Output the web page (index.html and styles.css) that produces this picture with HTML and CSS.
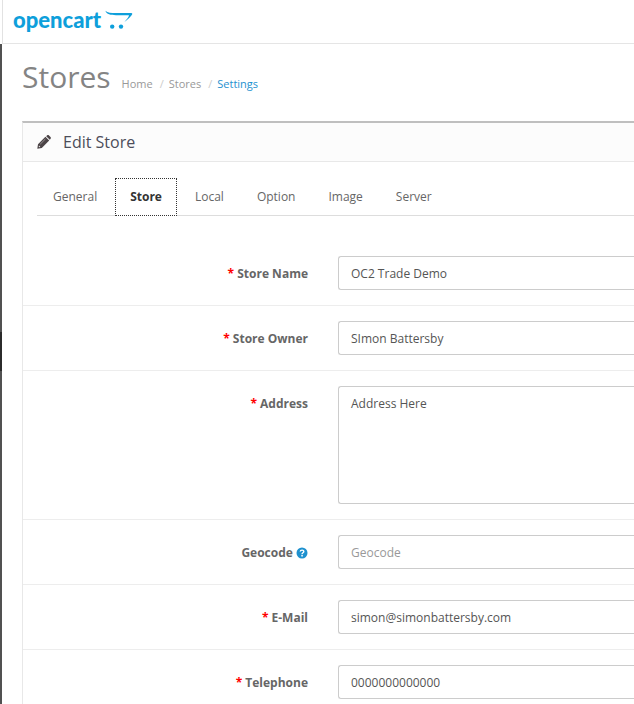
FILE: index.html
```html
<!DOCTYPE html>
<html lang="en">
<head>
    <meta charset="UTF-8">
    <meta name="viewport" content="width=device-width, initial-scale=1.0">
    <title>Stores</title>
    <link rel="stylesheet" href="styles.css">
</head>
<body>
    <header class="header">
        <a href="#" class="logo">
            <span>opencart</span>
            <svg width="28" height="20" viewBox="0 0 28 20" aria-hidden="true">
                <path d="M0.4 0.8 C2.5 3 6 3.1 11 3.1 L26.2 3 C27.6 3.1 27.6 4 26.8 5 C25 7.4 22.6 9.4 19.4 12 C21.2 9.4 24 7.4 24 5.2 L11 5.2 C5.5 5.1 1.6 4.4 0.4 0.8 Z" fill="#0e9fdb"/>
                <circle cx="7.2" cy="16.6" r="2.2" fill="#0e9fdb"/>
                <circle cx="16" cy="16.6" r="2.2" fill="#0e9fdb"/>
            </svg>
        </a>
    </header>

    <div class="wrapper">
        <div class="column-left"><div class="active"></div></div>

        <main class="content">
            <div class="page-header">
                <h1>Stores</h1>
                <ul class="breadcrumb">
                    <li><a href="#">Home</a></li>
                    <li><a href="#">Stores</a></li>
                    <li><a href="#" class="current">Settings</a></li>
                </ul>
            </div>

            <div class="panel">
                <div class="panel-heading">
                    <svg width="14" height="14" viewBox="0 0 14 14" aria-hidden="true">
                        <path d="M0.3 13.7 L1 9.2 L8.4 1.8 L12.2 5.6 L4.8 13 Z M9.2 1.2 L10.2 0.3 C10.8 -0.1 11.5 0 12 0.4 L13.5 2 C14 2.5 14 3.1 13.6 3.7 L12.8 4.8 Z" fill="#4c4447"/>
                        <path d="M2 10.6 L3.4 12 L2.4 12.3 L1.7 11.6 Z" fill="#fcfcfc"/>
                        <path d="M3.2 9.2 L8.4 4" stroke="#b5b0b2" stroke-width="0.7"/>
                    </svg>
                    <h3>Edit Store</h3>
                </div>

                <form class="panel-body">
                    <ul class="nav-tabs">
                        <li><a href="#">General</a></li>
                        <li><a href="#" class="active">Store</a></li>
                        <li><a href="#">Local</a></li>
                        <li><a href="#">Option</a></li>
                        <li><a href="#">Image</a></li>
                        <li><a href="#">Server</a></li>
                    </ul>

                    <div class="form-group required">
                        <label for="input-name">Store Name</label>
                        <input type="text" id="input-name" value="OC2 Trade Demo">
                    </div>
                    <div class="form-group required">
                        <label for="input-owner">Store Owner</label>
                        <input type="text" id="input-owner" value="SImon Battersby">
                    </div>
                    <div class="form-group required">
                        <label for="input-address">Address</label>
                        <textarea id="input-address">Address Here</textarea>
                    </div>
                    <div class="form-group">
                        <label for="input-geocode">Geocode
                            <svg class="help" width="12" height="12" viewBox="0 0 12 12" aria-hidden="true">
                                <circle cx="6" cy="6" r="5.5" fill="#1e91cf"/>
                                <path d="M4.2 4.5 C4.5 2.6 7.9 2.7 7.8 4.6 C7.7 5.8 6 5.8 6 7.2" fill="none" stroke="#fff" stroke-width="1.4"/>
                                <rect x="5.3" y="8" width="1.5" height="1.5" fill="#fff"/>
                            </svg>
                        </label>
                        <input type="text" id="input-geocode" placeholder="Geocode">
                    </div>
                    <div class="form-group required">
                        <label for="input-email">E-Mail</label>
                        <input type="text" id="input-email" value="simon@simonbattersby.com">
                    </div>
                    <div class="form-group required">
                        <label for="input-telephone">Telephone</label>
                        <input type="text" id="input-telephone" value="0000000000000">
                    </div>
                </form>
            </div>
        </main>
    </div>
</body>
</html>
```

FILE: styles.css
```css
* {
    box-sizing: border-box;
}

body {
    margin: 0;
    font-family: "Open Sans", sans-serif;
    font-size: 12px;
    line-height: 18px;
    color: #666;
    background: #fff;
    overflow-x: hidden;
}

a {
    color: inherit;
    text-decoration: none;
}

ul {
    list-style: none;
    margin: 0;
    padding: 0;
}

.header {
    height: 44px;
    margin-left: 2px;
    padding: 6px 10px;
    border-left: 1px solid #e2e2e2;
    border-bottom: 1px solid #e5e5e5;
}

.logo {
    display: flex;
    align-items: center;
    gap: 4px;
    height: 28px;
    color: #0e9fdb;
    font-family: Lato, sans-serif;
    font-size: 22px;
    font-weight: 900;
}

.wrapper {
    display: flex;
    min-height: calc(100vh - 44px);
}

.column-left {
    width: 2px;
    padding-top: 288px;
    background: #515151;
}

.column-left .active {
    height: 39px;
    background: #2b2b2b;
}

.content {
    display: flex;
    flex-direction: column;
    flex: 1;
    padding-left: 20px;
}

.page-header {
    display: flex;
    align-items: baseline;
    gap: 11px;
    padding: 13px 0 24px;
}

.page-header h1 {
    margin: 0;
    font-size: 30px;
    line-height: 40px;
    font-weight: 400;
    color: #848484;
}

.breadcrumb {
    display: flex;
    font-size: 11px;
    color: #999;
}

.breadcrumb li + li::before {
    content: "/";
    padding: 0 5px 0 7px;
    color: #ccc;
}

.breadcrumb .current {
    color: #1e91cf;
}

.panel {
    flex: 1;
    border-left: 1px solid #e8e8e8;
    border-top: 2px solid #bfbfbf;
}

.panel-heading {
    display: flex;
    align-items: center;
    gap: 12px;
    height: 39px;
    padding: 0 14px;
    background: #fcfcfc;
    border-bottom: 1px solid #e8e8e8;
}

.panel-heading h3 {
    margin: 0;
    font-size: 16px;
    font-weight: 400;
    color: #4c4d5a;
}

.panel-body {
    padding-top: 16px;
}

.nav-tabs {
    display: flex;
    gap: 3px;
    margin: 0 0 25px 14px;
    padding-left: 1px;
    border-bottom: 1px solid #ddd;
}

.nav-tabs a {
    display: block;
    margin-bottom: -1px;
    padding: 9px 14px;
    border: 1px solid transparent;
}

.nav-tabs .active {
    font-weight: 700;
    color: #333;
    background: #fff;
    border: 1px dotted #333;
}

.form-group {
    display: grid;
    grid-template-columns: 285px 1fr;
    column-gap: 30px;
    padding: 15px 0;
}

.form-group:last-child {
    padding-bottom: 0;
}

.form-group + .form-group {
    border-top: 1px solid #ededed;
}

.form-group label {
    padding-top: 9px;
    font-weight: 700;
    text-align: right;
}

.required label::before {
    content: "* ";
    color: #f00;
}

.help {
    vertical-align: -2px;
}

.form-group input,
.form-group textarea {
    display: block;
    width: 100%;
    height: 34px;
    margin: 0;
    padding: 7px 12px;
    border: 1px solid #ccc;
    border-right: 0;
    border-radius: 3px 0 0 3px;
    background: #fff;
    color: #555;
    font-family: inherit;
    font-size: 12px;
    line-height: 18px;
    outline: none;
}

.form-group textarea {
    height: 118px;
    padding-top: 8px;
    resize: none;
}

.form-group input::placeholder {
    color: #999;
}
```
